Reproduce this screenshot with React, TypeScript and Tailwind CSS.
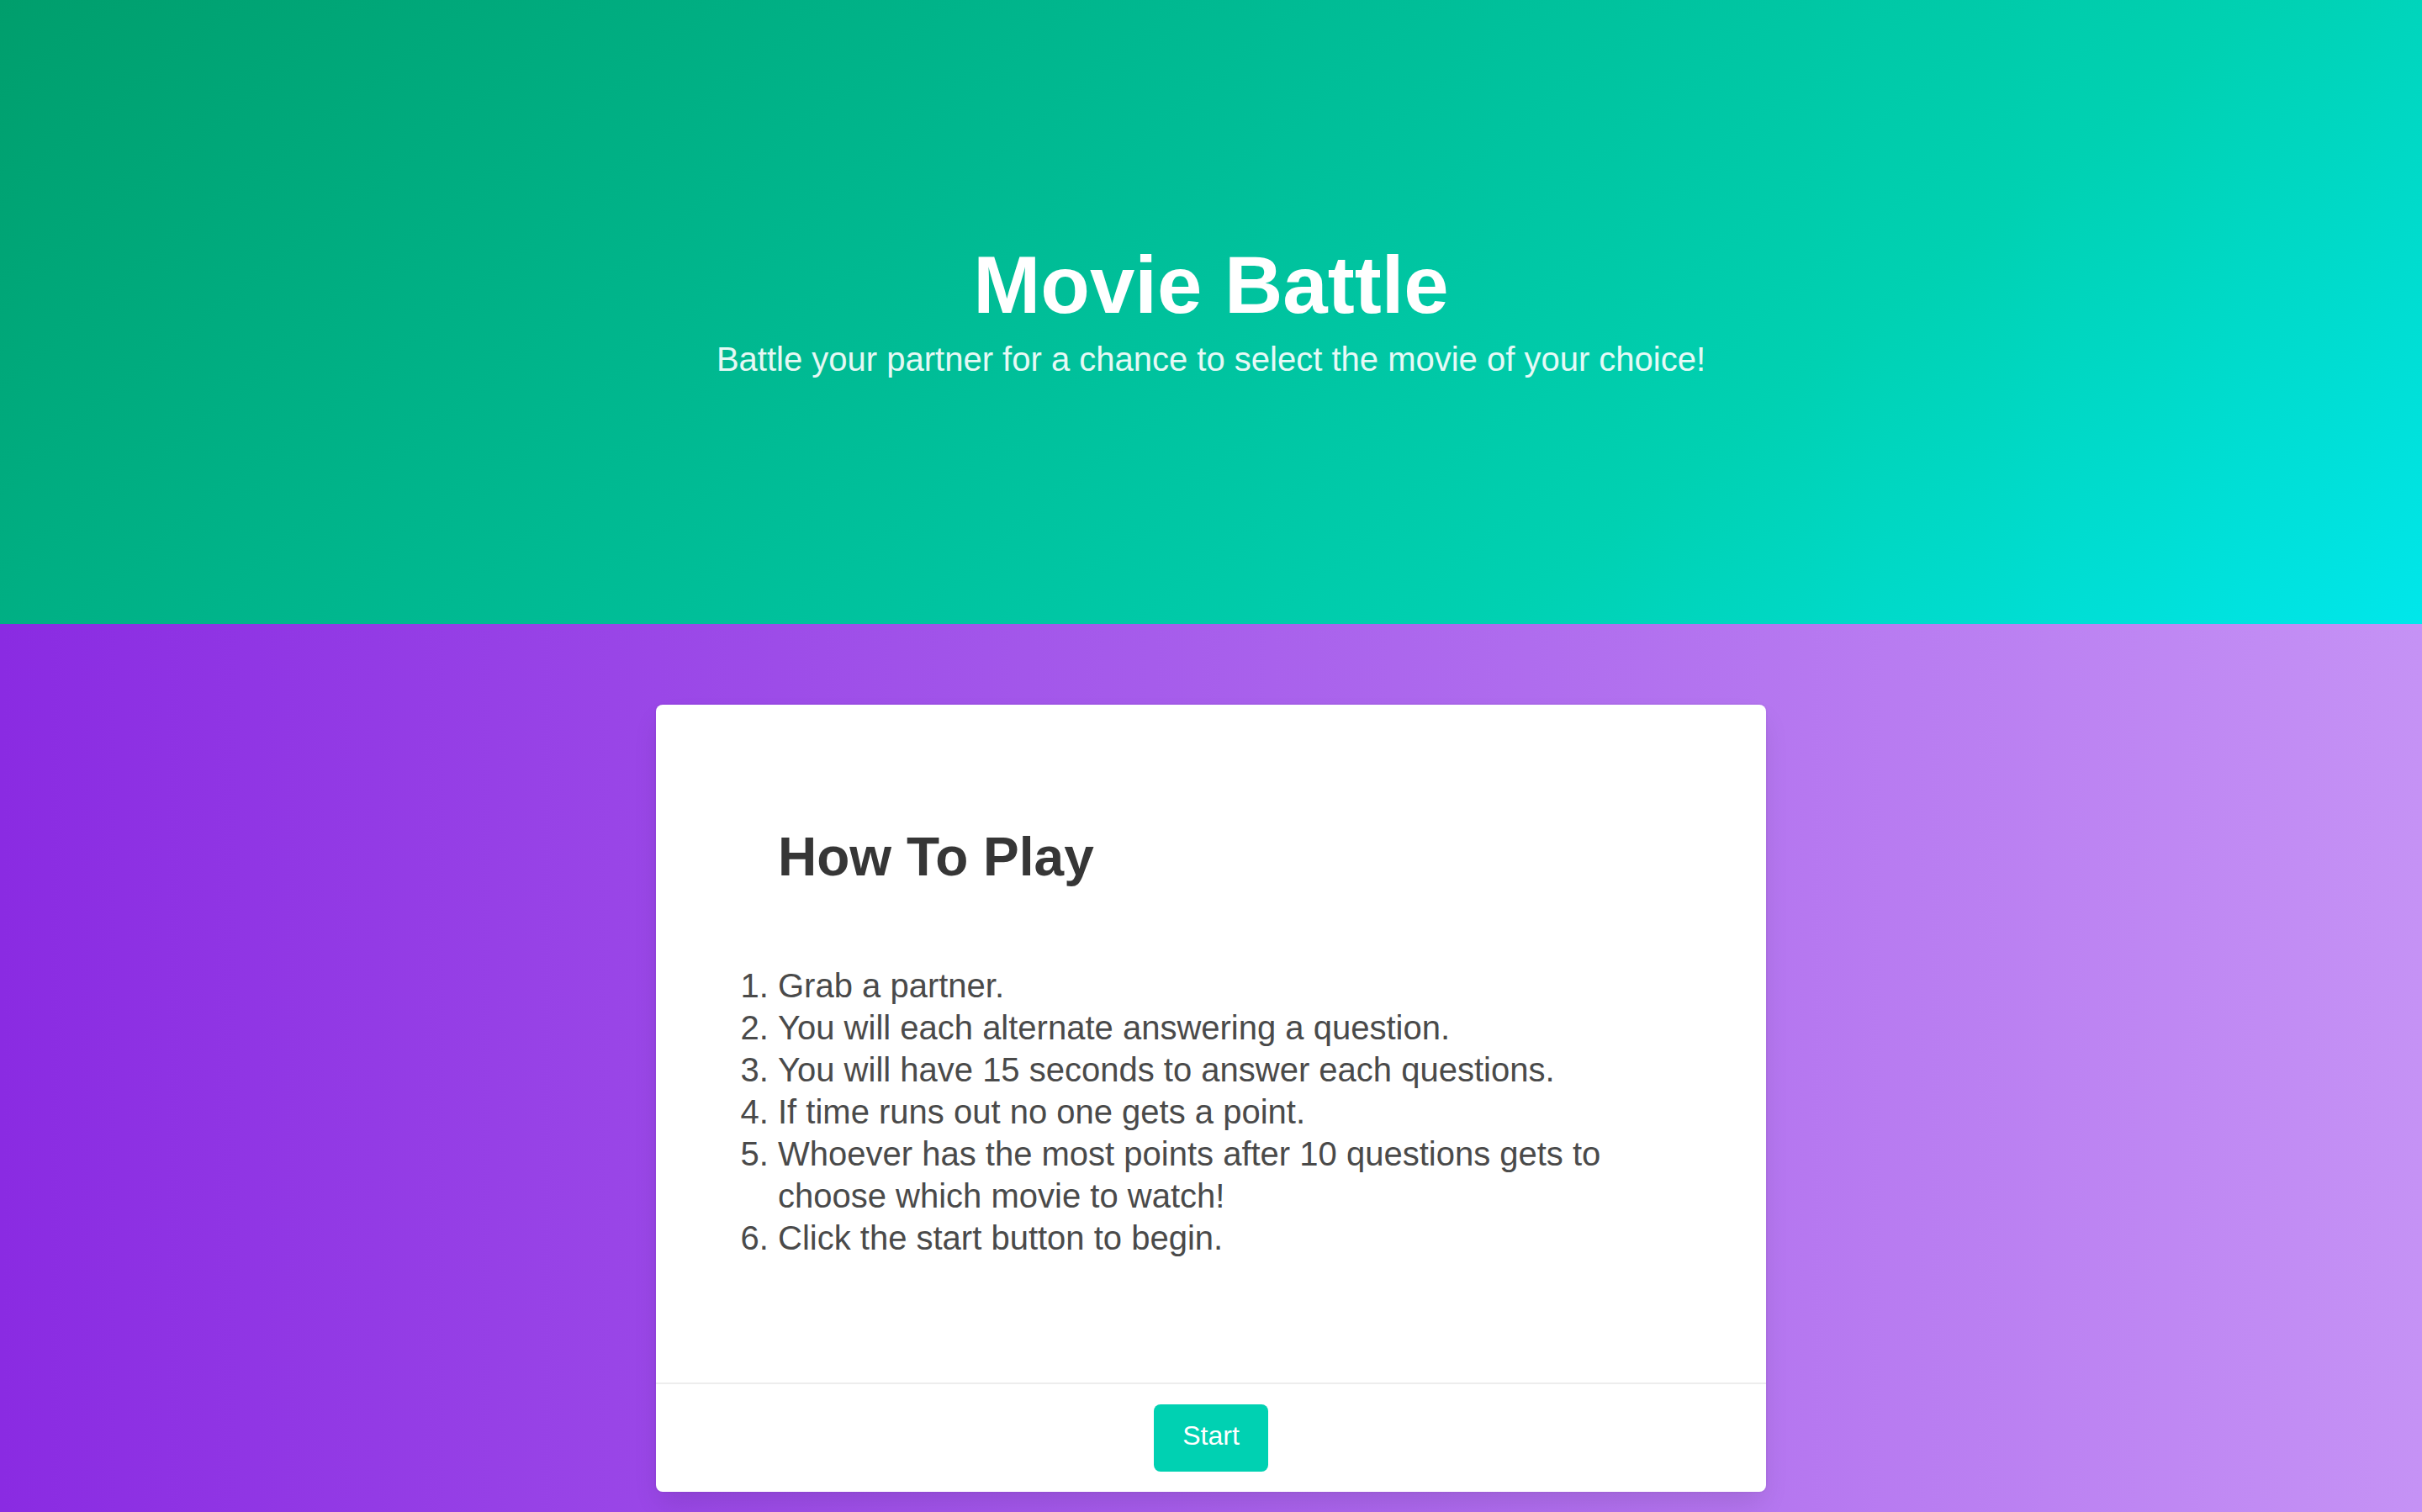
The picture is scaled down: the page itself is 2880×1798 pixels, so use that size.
import React from "react";

const rules = [
  "Grab a partner.",
  "You will each alternate answering a question.",
  "You will have 15 seconds to answer each questions.",
  "If time runs out no one gets a point.",
  "Whoever has the most points after 10 questions gets to choose which movie to watch!",
  "Click the start button to begin.",
];

const App = () => {
  return (
    <div className="min-h-screen font-['Liberation_Sans',Arial,sans-serif]">
      {/* hero */}
      <section className="h-[742px] flex flex-col items-center justify-center pb-[6px] bg-[linear-gradient(141deg,#009e6c_0%,#00d1b2_71%,#00e7eb_100%)]">
        <h1 className="text-[96px] leading-[1.125] font-bold text-white">
          Movie Battle
        </h1>
        <h2 className="mt-[9px] text-[40px] leading-[1.25] text-white/90">
          Battle your partner for a chance to select the movie of your choice!
        </h2>
      </section>

      {/* rules card */}
      <section className="pt-[96px] pb-[96px] bg-[linear-gradient(to_right,#8a2be2,#c592f5)]">
        <div className="w-[1320px] mx-auto bg-white rounded-[8px] shadow-[0_16px_32px_-4px_rgba(10,10,10,0.1),0_0_0_2px_rgba(10,10,10,0.02)]">
          <div className="pt-[145px] pb-[147px] pl-[145px] pr-[142px]">
            <h3 className="text-[64px] leading-[1.125] font-bold text-[#363636]">
              How To Play
            </h3>
            <ol className="mt-[92px] list-decimal text-[40px] leading-[50px] text-[#4a4a4a]">
              {rules.map((rule) => (
                <li key={rule}>{rule}</li>
              ))}
            </ol>
          </div>
          <div className="border-t-2 border-[#ededed] py-[24px] flex justify-center">
            <button className="h-[80px] px-[34px] pt-[13px] pb-[19px] rounded-[8px] bg-[#00d1b2] text-white text-[32px] leading-[48px]">
              Start
            </button>
          </div>
        </div>
      </section>
    </div>
  );
};

export default App;
